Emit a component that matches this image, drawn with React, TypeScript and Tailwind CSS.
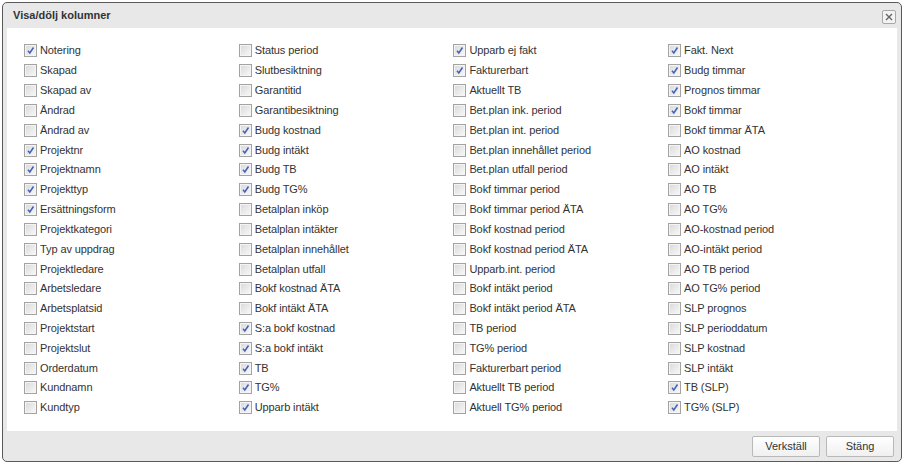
import React from "react";

type Item = [string, boolean];

const cols: Item[][] = [
  [
    ["Notering", true], ["Skapad", false], ["Skapad av", false], ["Ändrad", false], ["Ändrad av", false],
    ["Projektnr", true], ["Projektnamn", true], ["Projekttyp", true], ["Ersättningsform", true],
    ["Projektkategori", false], ["Typ av uppdrag", false], ["Projektledare", false], ["Arbetsledare", false],
    ["Arbetsplatsid", false], ["Projektstart", false], ["Projektslut", false], ["Orderdatum", false],
    ["Kundnamn", false], ["Kundtyp", false],
  ],
  [
    ["Status period", false], ["Slutbesiktning", false], ["Garantitid", false], ["Garantibesiktning", false],
    ["Budg kostnad", true], ["Budg intäkt", true], ["Budg TB", true], ["Budg TG%", true],
    ["Betalplan inköp", false], ["Betalplan intäkter", false], ["Betalplan innehållet", false],
    ["Betalplan utfall", false], ["Bokf kostnad ÄTA", false], ["Bokf intäkt ÄTA", false],
    ["S:a bokf kostnad", true], ["S:a bokf intäkt", true], ["TB", true], ["TG%", true], ["Upparb intäkt", true],
  ],
  [
    ["Upparb ej fakt", true], ["Fakturerbart", true], ["Aktuellt TB", false], ["Bet.plan ink. period", false],
    ["Bet.plan int. period", false], ["Bet.plan innehållet period", false], ["Bet.plan utfall period", false],
    ["Bokf timmar period", false], ["Bokf timmar period ÄTA", false], ["Bokf kostnad period", false],
    ["Bokf kostnad period ÄTA", false], ["Upparb.int. period", false], ["Bokf intäkt period", false],
    ["Bokf intäkt period ÄTA", false], ["TB period", false], ["TG% period", false],
    ["Fakturerbart period", false], ["Aktuellt TB period", false], ["Aktuell TG% period", false],
  ],
  [
    ["Fakt. Next", true], ["Budg timmar", true], ["Prognos timmar", true], ["Bokf timmar", true],
    ["Bokf timmar ÄTA", false], ["AO kostnad", false], ["AO intäkt", false], ["AO TB", false],
    ["AO TG%", false], ["AO-kostnad period", false], ["AO-intäkt period", false], ["AO TB period", false],
    ["AO TG% period", false], ["SLP prognos", false], ["SLP perioddatum", false], ["SLP kostnad", false],
    ["SLP intäkt", false], ["TB (SLP)", true], ["TG% (SLP)", true],
  ],
];

function Box({ checked }: { checked: boolean }) {
  return (
    <span className="relative w-[13px] h-[13px] shrink-0 border border-[#a3a3a3] bg-gradient-to-br from-[#d9d9d9] to-[#f9f9f9] shadow-[inset_0_0_0_1px_#f4f4f4]">
      {checked && (
        <svg className="absolute left-[1px] top-[1px]" width="9" height="9" viewBox="0 0 9 9">
          <path d="M2 4.8 L3.8 7 L7.5 1.5" fill="none" stroke="#4262b8" strokeWidth="1.5" />
        </svg>
      )}
    </span>
  );
}

export default function App() {
  return (
    <div className="w-[904px] h-[465px] bg-white p-[2px] font-['Liberation_Sans',Arial,sans-serif] text-[11px] text-[#333]">
      <div className="w-full h-[460px] rounded-[5px] border border-[#5a5a5a] bg-[#e8e8e8] flex flex-col px-[4px] overflow-hidden">
        <div className="h-[25px] flex items-center justify-between pl-[6px] pr-[1px] shrink-0">
          <span className="font-bold text-[#333] text-[11px]">Visa/dölj kolumner</span>
          <span className="w-[14px] h-[14px] border border-[#a8a8a8] rounded-[2px] bg-[#f3f3f3] flex items-center justify-center mt-[2px]">
            <svg width="8" height="8" viewBox="0 0 8 8">
              <path d="M1 1 L7 7 M7 1 L1 7" stroke="#666" strokeWidth="1.4" />
            </svg>
          </span>
        </div>
        <div className="bg-white h-[403px] shrink-0 flex pl-[17px] pt-[13px]">
          {cols.map((col, i) => (
            <div key={i} className="w-[214.7px] flex flex-col">
              {col.map(([label, checked]) => (
                <div key={label} className="h-[19.83px] flex items-center gap-[3px]">
                  <Box checked={checked} />
                  <span className="whitespace-nowrap leading-none tracking-[-0.1px]">{label}</span>
                </div>
              ))}
            </div>
          ))}
        </div>
        <div className="flex-1 flex items-center justify-end gap-[6px] pr-[3px] pt-[1px]">
          <button className="w-[68px] h-[21px] border border-[#b9b9b9] rounded-[2px] bg-gradient-to-b from-white to-[#f0f0f0] text-[11px] text-[#333]">Verkställ</button>
          <button className="w-[68px] h-[21px] border border-[#b9b9b9] rounded-[2px] bg-gradient-to-b from-white to-[#f0f0f0] text-[11px] text-[#333]">Stäng</button>
        </div>
      </div>
    </div>
  );
}
